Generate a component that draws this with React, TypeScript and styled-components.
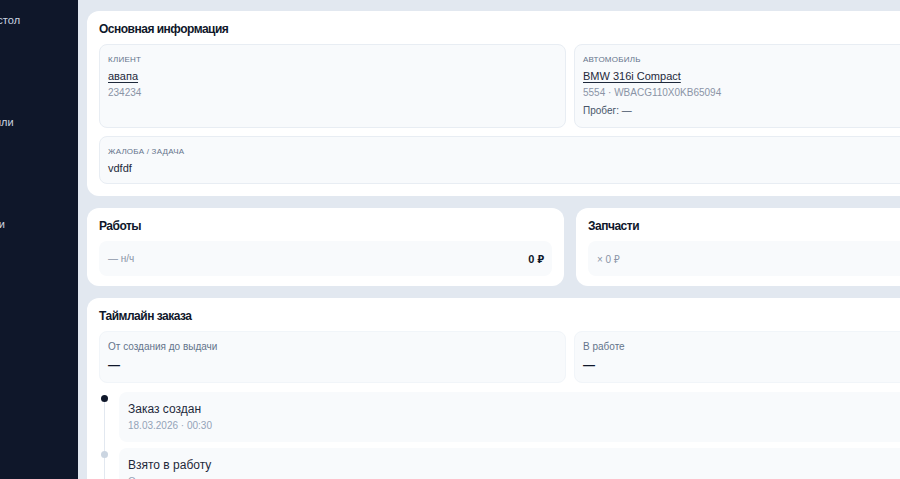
import React from "react";
import styled, { createGlobalStyle } from "styled-components";

const Global = createGlobalStyle`
  html, body { margin: 0; padding: 0; height: 100%; overflow: hidden; }
  body { font-family: "Liberation Sans", Arial, "Noto Sans", sans-serif; background: #e2e8f0; color: #0f172a; }
  * { box-sizing: border-box; }
`;

const Shell = styled.div`
  display: flex;
  width: 100vw;
  height: 100vh;
  overflow: hidden;
`;

const Sidebar = styled.aside`
  flex: 0 0 78px;
  height: 100%;
  background: #0f172a;
  overflow: hidden;
`;

const Nav = styled.nav`
  display: flex;
  flex-direction: column;
  margin-left: -49px;
  padding-top: 12px;
  width: 200px;
`;

const NavItem = styled.div`
  height: 51px;
  font-size: 11px;
  line-height: 16px;
  color: #cbd5e1;
  white-space: nowrap;
`;

const Main = styled.main`
  flex: 0 0 auto;
  padding: 11px 0 0 9px;
`;

const Content = styled.div`
  width: 966px;
  display: flex;
  flex-direction: column;
  gap: 12px;
`;

const Card = styled.section<{ $pb?: number }>`
  background: #ffffff;
  border-radius: 12px;
  padding: 10px 12px ${(p) => p.$pb ?? 12}px;
`;

const CardTitle = styled.h2`
  margin: 0 0 7px;
  font-size: 12px;
  line-height: 16px;
  font-weight: 700;
  letter-spacing: -0.5px;
  color: #0f172a;
`;

const TwoCol = styled.div<{ $gap: number }>`
  display: grid;
  grid-template-columns: 1fr 1fr;
  gap: ${(p) => p.$gap}px;
`;

const Stack = styled.div`
  display: flex;
  flex-direction: column;
  gap: 8px;
`;

const InfoBox = styled.div<{ $compact?: boolean }>`
  background: #f8fafc;
  border: 1px solid #e8edf3;
  border-radius: 8px;
  padding: 9px 8px ${(p) => (p.$compact ? 7 : 8)}px;
`;

const Label = styled.div`
  font-size: 8px;
  line-height: 12px;
  letter-spacing: 0.03em;
  text-transform: uppercase;
  color: #64748b;
`;

const LinkText = styled.div`
  margin-top: 2px;
  font-size: 11px;
  line-height: 16px;
  color: #1e293b;
  text-decoration: underline;
  text-underline-offset: 2px;
`;

const Plain = styled.div`
  margin-top: 2px;
  font-size: 11px;
  line-height: 16px;
  color: #1e293b;
`;

const Muted = styled.div<{ $tone?: "light" | "mid" }>`
  margin-top: ${(p) => (p.$tone === "mid" ? 2 : 1)}px;
  font-size: 10px;
  line-height: 16px;
  color: ${(p) => (p.$tone === "mid" ? "#475569" : "#8a94a6")};
`;

const SumRow = styled.div`
  display: flex;
  align-items: center;
  justify-content: space-between;
  height: 35px;
  padding: 0 8px 0 9px;
  background: #f8fafc;
  border-radius: 8px;
`;

const SumMuted = styled.span`
  font-size: 10px;
  color: #8a94a6;
`;

const SumValue = styled.span`
  font-size: 11px;
  font-weight: 700;
  color: #0f172a;
`;

const StatBox = styled.div`
  height: 52px;
  background: #f8fafc;
  border: 1px solid #f1f5f9;
  border-radius: 8px;
  padding: 8px 8px 0;
`;

const StatLabel = styled.div`
  font-size: 10px;
  line-height: 14px;
  color: #64748b;
`;

const StatValue = styled.div`
  margin-top: 2px;
  font-size: 12px;
  line-height: 18px;
  font-weight: 700;
  color: #0f172a;
`;

const Timeline = styled.div`
  margin-top: 9px;
  display: flex;
  flex-direction: column;
  gap: 6px;
`;

const TLItem = styled.div`
  display: grid;
  grid-template-columns: 20px 1fr;
`;

const Rail = styled.div`
  position: relative;
  &::before {
    content: "";
    position: absolute;
    left: 5px;
    top: 6px;
    bottom: -12px;
    width: 1px;
    background: #e2e8f0;
  }
`;

const Dot = styled.span<{ $active: boolean }>`
  position: absolute;
  left: 2px;
  top: 3px;
  width: 7px;
  height: 7px;
  border-radius: 50%;
  background: ${(p) => (p.$active ? "#0f172a" : "#cbd5e1")};
`;

const EventBox = styled.div`
  background: #f8fafc;
  border-radius: 8px;
  padding: 9px 9px 8px;
  min-height: 50px;
`;

const EventTitle = styled.div`
  font-size: 12px;
  line-height: 16px;
  color: #1e293b;
`;

const EventDate = styled.div`
  margin-top: 1px;
  font-size: 10px;
  line-height: 16px;
  color: #94a3b8;
`;

const navItems = ["Рабочий стол", "Заказы", "Автомобили", "Клиенты", "Настройки"];

const events = [
  { title: "Заказ создан", date: "18.03.2026 · 00:30", active: true },
  { title: "Взято в работу", date: "Ожидается", active: false },
];

export default function App() {
  return (
    <>
      <Global />
      <Shell>
        <Sidebar>
          <Nav>
            {navItems.map((n) => (
              <NavItem key={n}>{n}</NavItem>
            ))}
          </Nav>
        </Sidebar>
        <Main>
          <Content>
            <Card>
              <CardTitle>Основная информация</CardTitle>
              <Stack>
                <TwoCol $gap={8}>
                  <InfoBox>
                    <Label>Клиент</Label>
                    <LinkText>авапа</LinkText>
                    <Muted>234234</Muted>
                  </InfoBox>
                  <InfoBox>
                    <Label>Автомобиль</Label>
                    <LinkText>BMW 316i Compact</LinkText>
                    <Muted>5554 · WBACG110X0KB65094</Muted>
                    <Muted $tone="mid">Пробег: —</Muted>
                  </InfoBox>
                </TwoCol>
                <InfoBox $compact>
                  <Label>Жалоба / задача</Label>
                  <Plain>vdfdf</Plain>
                </InfoBox>
              </Stack>
            </Card>

            <TwoCol $gap={12}>
              <Card $pb={10}>
                <CardTitle>Работы</CardTitle>
                <SumRow>
                  <SumMuted>— н/ч</SumMuted>
                  <SumValue>0 ₽</SumValue>
                </SumRow>
              </Card>
              <Card $pb={10}>
                <CardTitle>Запчасти</CardTitle>
                <SumRow>
                  <SumMuted>× 0 ₽</SumMuted>
                </SumRow>
              </Card>
            </TwoCol>

            <Card>
              <CardTitle>Таймлайн заказа</CardTitle>
              <TwoCol $gap={8}>
                <StatBox>
                  <StatLabel>От создания до выдачи</StatLabel>
                  <StatValue>—</StatValue>
                </StatBox>
                <StatBox>
                  <StatLabel>В работе</StatLabel>
                  <StatValue>—</StatValue>
                </StatBox>
              </TwoCol>
              <Timeline>
                {events.map((e) => (
                  <TLItem key={e.title}>
                    <Rail>
                      <Dot $active={e.active} />
                    </Rail>
                    <EventBox>
                      <EventTitle>{e.title}</EventTitle>
                      <EventDate>{e.date}</EventDate>
                    </EventBox>
                  </TLItem>
                ))}
              </Timeline>
            </Card>
          </Content>
        </Main>
      </Shell>
    </>
  );
}
